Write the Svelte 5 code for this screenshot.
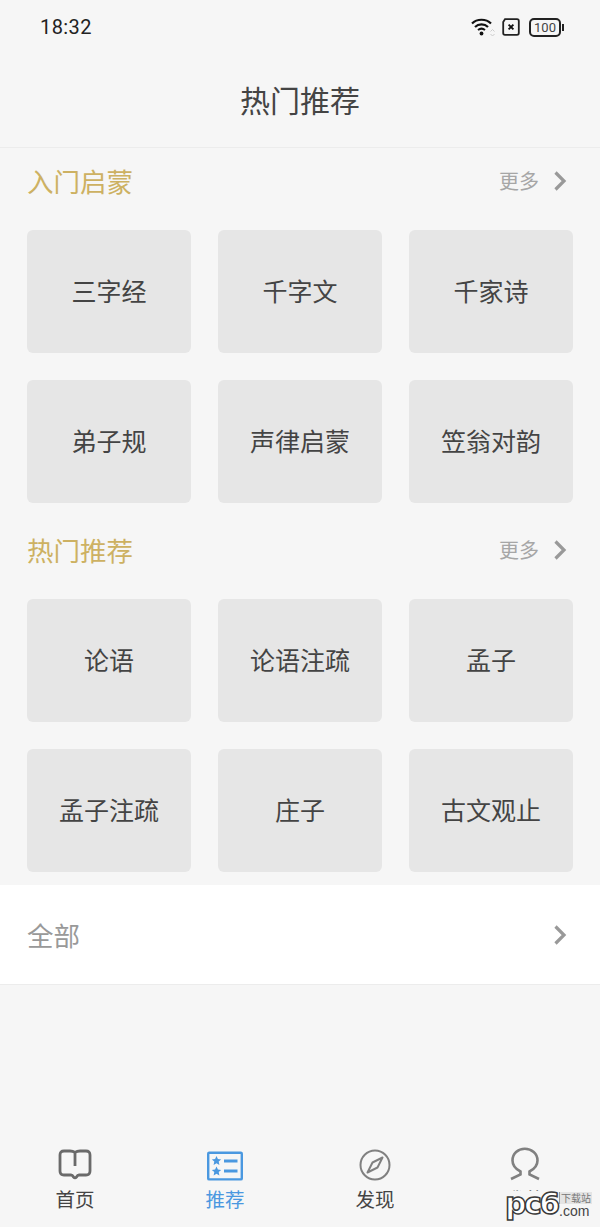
<script lang="ts">
  const sections = [
    { title: '入门启蒙', books: ['三字经', '千字文', '千家诗', '弟子规', '声律启蒙', '笠翁对韵'] },
    { title: '热门推荐', books: ['论语', '论语注疏', '孟子', '孟子注疏', '庄子', '古文观止'] }
  ];
</script>

{#snippet chevron()}
  <svg class="chevron" width="14" height="22" viewBox="0 0 14 22" fill="none">
    <path d="M2.5 2.5 L11 11 L2.5 19.5" stroke="#999" stroke-width="3.2" stroke-linejoin="miter" />
  </svg>
{/snippet}

<div class="page">
  <div class="status">
    <span class="time">18:32</span>
    <div class="status-icons">
      <svg width="26" height="20" viewBox="0 0 26 20" fill="none">
        <path d="M2 6.5 C7 1.5 16 1.5 21 6.5" stroke="#111" stroke-width="2.2" />
        <path d="M5 10 C8.5 6.6 14.5 6.6 18 10" stroke="#111" stroke-width="2.2" />
        <path d="M8 13 C10 11.4 13 11.4 15 13" stroke="#111" stroke-width="2" />
        <circle cx="11.5" cy="16.5" r="1.9" fill="#111" />
        <path d="M20.5 14.5 L22.5 12.5 L24.5 14.5 M20.5 17 L22.5 19 L24.5 17" stroke="#ccc" stroke-width="1" />
      </svg>
      <svg width="18" height="18" viewBox="0 0 18 18" fill="none">
        <path d="M3 1.2 H15 Q16.8 1.2 16.8 3 V15 Q16.8 16.8 15 16.8 H3 Q1.2 16.8 1.2 15 V4 Z" stroke="#222" stroke-width="1.8" />
        <path d="M6.6 6.6 L11.4 11.4 M11.4 6.6 L6.6 11.4" stroke="#111" stroke-width="1.9" />
      </svg>
      <div class="battery"><span>100</span></div>
    </div>
  </div>

  <header class="nav-title">热门推荐</header>

  {#each sections as s}
    <section>
      <div class="sec-head">
        <span class="sec-title">{s.title}</span>
        <span class="more">更多{@render chevron()}</span>
      </div>
      <div class="grid">
        {#each s.books as b}
          <div class="card">{b}</div>
        {/each}
      </div>
    </section>
  {/each}

  <div class="all">
    <span>全部</span>
    {@render chevron()}
  </div>

  <nav class="tabs">
    <div class="tab">
      <svg width="34" height="32" viewBox="0 0 34 32" fill="none">
        <path d="M17 3.5 C15.5 2.4 14 2 12 2 H6 Q2 2 2 6 V22 Q2 26 6 26 H13 C14.5 26 15 27 15.5 28 Q17 29.6 18.5 28 C19 27 19.5 26 21 26 H28 Q32 26 32 22 V6 Q32 2 28 2 H22 C20 2 18.5 2.4 17 3.5 V17" stroke="#6a6a6a" stroke-width="2.8" />
      </svg>
      <span>首页</span>
    </div>
    <div class="tab active">
      <svg width="36" height="30" viewBox="0 0 36 30" fill="none">
        <rect x="1.2" y="1.8" width="33.6" height="26.6" rx="1" stroke="#4a98e0" stroke-width="2.4" />
        <path d="M9.5 6 L10.9 9.1 L14.2 9.4 L11.7 11.6 L12.4 14.9 L9.5 13.2 L6.6 14.9 L7.3 11.6 L4.8 9.4 L8.1 9.1 Z" fill="#4a98e0" transform="translate(0 -1)" />
        <path d="M9.5 6 L10.9 9.1 L14.2 9.4 L11.7 11.6 L12.4 14.9 L9.5 13.2 L6.6 14.9 L7.3 11.6 L4.8 9.4 L8.1 9.1 Z" fill="#4a98e0" transform="translate(0 9.5)" />
        <path d="M17 10 H30.5 M17 20 H30.5" stroke="#4a98e0" stroke-width="3" />
      </svg>
      <span>推荐</span>
    </div>
    <div class="tab">
      <svg width="32" height="32" viewBox="0 0 32 32" fill="none">
        <circle cx="16" cy="16" r="14.5" stroke="#808080" stroke-width="2" />
        <path d="M23.5 8.5 L18.5 18.5 L8.5 23.5 L13.5 13.5 Z" stroke="#808080" stroke-width="2" stroke-linejoin="round" />
      </svg>
      <span>发现</span>
    </div>
    <div class="tab">
      <svg width="32" height="34" viewBox="0 0 32 34" fill="none">
        <path d="M2 32 L11.5 27.5 V24.5 C6.5 22 3.5 18 3.5 13.5 C3.5 6.5 9 1.8 15.8 1.8 C22.6 1.8 28.5 6.5 28.5 13.5 C28.5 18 25.5 22 20.5 24.5 V27.5 L30 32" stroke="#808080" stroke-width="2.6" />
      </svg>
      <span>我的</span>
    </div>
  </nav>

  <div class="watermark">
    <span class="wm-logo">pc6</span>
    <span class="wm-side"><span class="wm-dl">下载站</span><span class="wm-com">.com</span></span>
  </div>
</div>

<style>
  :global(body) {
    margin: 0;
    background: #f6f6f6;
  }

  .page {
    position: relative;
    width: 600px;
    height: 1227px;
    overflow: hidden;
    background: #f6f6f6;
    font-family: "Noto Sans CJK SC", "Noto Sans", sans-serif;
    display: flex;
    flex-direction: column;
  }

  .status {
    height: 54px;
    padding: 0 36px 0 40px;
    display: flex;
    align-items: center;
    justify-content: space-between;
  }

  .time {
    font-family: Roboto, sans-serif;
    font-size: 20px;
    letter-spacing: 0.4px;
    color: #222;
  }

  .status-icons {
    display: flex;
    align-items: center;
    gap: 6px;
  }

  .battery {
    width: 28px;
    height: 15px;
    border: 2px solid #222;
    border-radius: 5px;
    font-family: Roboto, sans-serif;
    font-size: 13px;
    line-height: 15px;
    text-align: center;
    color: #444;
    margin: 0 3px;
    position: relative;
  }

  .battery::after {
    content: '';
    position: absolute;
    right: -5px;
    top: 4px;
    width: 2px;
    height: 7px;
    background: #222;
  }

  .nav-title {
    height: 93px;
    line-height: 90px;
    text-align: center;
    font-size: 30px;
    color: #444;
    border-bottom: 1px solid #ececec;
  }

  section {
    display: flex;
    flex-direction: column;
  }

  section + section {
    margin-top: 14px;
  }

  .sec-head {
    height: 69px;
    box-sizing: border-box;
    padding: 0 33px 4px 27px;
    display: flex;
    align-items: center;
    justify-content: space-between;
  }

  .sec-title {
    font-size: 26.5px;
    color: #cdb162;
  }

  .more {
    display: flex;
    align-items: center;
    gap: 14px;
    font-size: 20px;
    color: #a6a6a6;
  }

  .grid {
    padding: 13px 27px 0;
    display: grid;
    grid-template-columns: repeat(3, 164px);
    grid-auto-rows: 123px;
    column-gap: 27px;
    row-gap: 27px;
  }

  .card {
    display: flex;
    align-items: center;
    justify-content: center;
    padding-bottom: 3px;
    box-sizing: border-box;
    background: #e6e6e6;
    border-radius: 6px;
    font-size: 25px;
    color: #444;
  }

  .all {
    margin-top: 13px;
    height: 99px;
    padding: 0 33px 0 27px;
    background: #fff;
    border-bottom: 1px solid #ececec;
    display: flex;
    align-items: center;
    justify-content: space-between;
    font-size: 26.5px;
    color: #999;
  }

  .tabs {
    margin-top: auto;
    height: 84px;
    display: grid;
    grid-template-columns: 1fr 1fr 1fr 1fr;
  }

  .tab {
    display: flex;
    flex-direction: column;
    align-items: center;
    font-size: 19.5px;
    color: #444;
    height: 84px;
    justify-content: flex-end;
    padding-bottom: 14px;
    gap: 4px;
    box-sizing: border-box;
  }

  .tab span {
    line-height: 28px;
  }

  .tab.active {
    color: #4a98e0;
  }

  .watermark {
    position: absolute;
    left: 505px;
    top: 1191px;
    width: 90px;
    height: 28px;
    display: flex;
    align-items: flex-start;
    font-family: "DejaVu Sans", sans-serif;
  }

  .wm-logo {
    width: 53px;
    height: 28px;
    font-size: 30px;
    line-height: 25px;
    font-weight: 700;
    color: #fff;
    -webkit-text-stroke: 1.5px #3a3a3a;
    letter-spacing: -2.5px;
    background: #f6f6f6;
  }

  .wm-side {
    display: flex;
    flex-direction: column;
    margin-left: 1px;
  }

  .wm-dl {
    font-family: "Noto Sans CJK SC", sans-serif;
    font-size: 10px;
    line-height: 12px;
    text-align: center;
    width: 32px;
    margin-top: 1px;
    color: #777;
    background: #e4e4e4;
    border-left: 1px solid #999;
  }

  .wm-com {
    font-family: "Liberation Sans", sans-serif;
    font-size: 14px;
    line-height: 15px;
    color: #444;
  }
</style>
